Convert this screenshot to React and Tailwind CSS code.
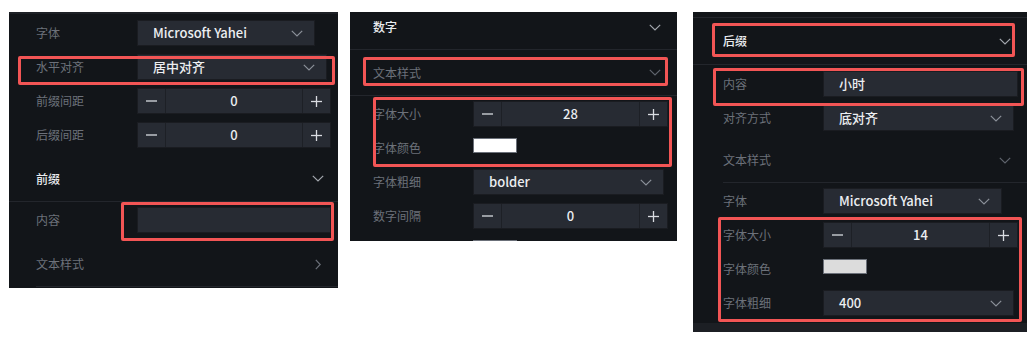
import React from 'react';

const font = { fontFamily: '"Noto Sans CJK SC", "Noto Sans", sans-serif' };

const ChevronDown = ({ className = 'text-[#8b9099]' }) => (
  <svg width="12" height="7" viewBox="0 0 12 7" className={className}>
    <polyline points="0.8,0.8 6,6 11.2,0.8" fill="none" stroke="currentColor" strokeWidth="1.2" />
  </svg>
);

const ChevronRight = () => (
  <svg width="6" height="11" viewBox="0 0 6 11" className="text-[#6a6f78]">
    <polyline points="0.8,0.8 5.2,5.5 0.8,10.2" fill="none" stroke="currentColor" strokeWidth="1.2" />
  </svg>
);

const Minus = () => (
  <svg width="11" height="2" viewBox="0 0 11 2">
    <line x1="0" y1="1" x2="11" y2="1" stroke="#d9dce1" strokeWidth="1.3" />
  </svg>
);

const Plus = () => (
  <svg width="11" height="11" viewBox="0 0 11 11">
    <line x1="0" y1="5.5" x2="11" y2="5.5" stroke="#d9dce1" strokeWidth="1.3" />
    <line x1="5.5" y1="0" x2="5.5" y2="11" stroke="#d9dce1" strokeWidth="1.3" />
  </svg>
);

const Label = ({ children, w = 'w-[100px]' }) => (
  <div className={`${w} shrink-0 text-[12px] text-[#6c717a]`}>{children}</div>
);

const Select = ({ value, w }) => (
  <div className={`flex items-center justify-between h-[26px] bg-[#272b33] border border-[#1a1c21] pl-[15px] pr-[11px] text-[13px] font-medium text-[#eceef1] ${w}`}>
    <span>{value}</span>
    <ChevronDown />
  </div>
);

const Input = ({ value, w }) => (
  <div className={`flex items-center h-[26px] bg-[#272b33] border border-[#1a1c21] pl-[15px] text-[13px] font-medium text-[#eceef1] ${w}`}>
    {value}
  </div>
);

const Stepper = ({ value, w }) => (
  <div className={`flex h-[26px] bg-[#272b33] border border-[#1a1c21] text-[13px] font-medium text-[#eceef1] ${w}`}>
    <div className="w-[28px] flex items-center justify-center border-r border-[#1d2026]">
      <Minus />
    </div>
    <div className="flex-1 flex items-center justify-center">{value}</div>
    <div className="w-[28px] flex items-center justify-center border-l border-[#1d2026]">
      <Plus />
    </div>
  </div>
);

const Swatch = ({ color }) => (
  <div className={`self-start mt-[3px] w-[44px] h-[15px] border border-[#6b7079] ${color}`} />
);

const Row = ({ label, children, pad, lw }) => (
  <div className={`flex items-center h-[26px] ${pad}`}>
    <Label w={lw}>{label}</Label>
    {children}
  </div>
);

const Mark = ({ className }) => (
  <div className={`absolute border-[3px] border-[#f25555] rounded-[2px] pointer-events-none ${className}`} />
);

export default function App() {
  return (
    <div className="relative w-[1034px] h-[344px] bg-white flex items-start pt-[12px]" style={font}>
      {/* panel 1 */}
      <div className="ml-[9px] w-[329px] bg-[#121519]">
        <div className="h-[2px] bg-[#1e2126]" />
        <div className="pt-[6px] flex flex-col gap-[8px]">
          <Row label="字体" pad="pl-[27px]" lw="w-[101px]">
            <Select value="Microsoft Yahei" w="w-[178px]" />
          </Row>
          <Row label="水平对齐" pad="pl-[27px]" lw="w-[101px]">
            <Select value="居中对齐" w="w-[190px]" />
          </Row>
          <Row label="前缀间距" pad="pl-[27px]" lw="w-[101px]">
            <Stepper value="0" w="w-[194px]" />
          </Row>
          <Row label="后缀间距" pad="pl-[27px]" lw="w-[101px]">
            <Stepper value="0" w="w-[194px]" />
          </Row>
        </div>
        <div className="mt-[8px] h-[46px] flex items-center justify-between pl-[27px] pr-[14px] border-b border-[#23262c]">
          <span className="text-[12px] font-medium text-[#e9ebee]">前缀</span>
          <ChevronDown className="text-[#a3a7ae]" />
        </div>
        <div className="mt-[5px]">
          <Row label="内容" pad="pl-[27px]" lw="w-[101px]">
            <Input value="" w="w-[194px]" />
          </Row>
        </div>
        <div className="mt-[9px] ml-[27px] h-[45px] flex items-center justify-between pr-[17px] border-b border-[#23262c]">
          <span className="text-[12px] text-[#6c717a]">文本样式</span>
          <ChevronRight />
        </div>
        <div className="h-[1px]" />
      </div>

      {/* panel 2 */}
      <div className="ml-[12px] w-[327px] h-[229px] overflow-hidden bg-[#121519]">
        <div className="h-[38px] flex items-center justify-between pl-[23px] pr-[16px] pb-[7px] border-b border-[#23262c]">
          <span className="text-[12px] font-medium text-[#e9ebee]">数字</span>
          <ChevronDown className="text-[#a3a7ae]" />
        </div>
        <div className="h-[46px] flex items-center justify-between pl-[23px] pr-[16px] border-b border-[#23262c]">
          <span className="text-[12px] text-[#6c717a]">文本样式</span>
          <ChevronDown className="text-[#5f646d]" />
        </div>
        <div className="pt-[5px] flex flex-col gap-[8px]">
          <Row label="字体大小" pad="pl-[23px]">
            <Stepper value="28" w="w-[195px]" />
          </Row>
          <Row label="字体颜色" pad="pl-[23px]">
            <Swatch color="bg-white" />
          </Row>
          <Row label="字体粗细" pad="pl-[23px]">
            <Select value="bolder" w="w-[191px]" />
          </Row>
          <Row label="数字间隔" pad="pl-[23px]">
            <Stepper value="0" w="w-[195px]" />
          </Row>
          <Row label="" pad="pl-[23px]">
            <Swatch color="bg-white" />
          </Row>
        </div>
      </div>

      {/* panel 3 */}
      <div className="ml-[16px] w-[334px] bg-[#121519]">
        <div className="h-[6px] border-b border-[#23262c]" />
        <div className="h-[47px] flex items-center justify-between pl-[30px] pr-[16px] border-b border-[#23262c]">
          <span className="text-[12px] font-medium text-[#e9ebee]">后缀</span>
          <ChevronDown className="text-[#a3a7ae]" />
        </div>
        <div className="mt-[6px] flex flex-col gap-[8px]">
          <Row label="内容" pad="pl-[30px]">
            <Input value="小时" w="w-[195px]" />
          </Row>
          <Row label="对齐方式" pad="pl-[30px]">
            <Select value="底对齐" w="w-[191px]" />
          </Row>
        </div>
        <div className="mt-[7px] ml-[30px] h-[45px] flex items-center justify-between pr-[16px] border-b border-[#23262c]">
          <span className="text-[12px] text-[#6c717a]">文本样式</span>
          <ChevronDown className="text-[#5f646d]" />
        </div>
        <div className="mt-[5px] flex flex-col gap-[8px]">
          <Row label="字体" pad="pl-[30px]">
            <Select value="Microsoft Yahei" w="w-[179px]" />
          </Row>
          <Row label="字体大小" pad="pl-[30px]">
            <Stepper value="14" w="w-[195px]" />
          </Row>
          <Row label="字体颜色" pad="pl-[30px]">
            <Swatch color="bg-[#dcdcdc]" />
          </Row>
          <Row label="字体粗细" pad="pl-[30px]">
            <Select value="400" w="w-[191px]" />
          </Row>
        </div>
        <div className="h-[7px]" />
        <div className="h-[9px] bg-[#1c1f24]" />
      </div>

      {/* annotation marks */}
      <Mark className="left-[18px] top-[56px] w-[317px] h-[29px]" />
      <Mark className="left-[121px] top-[202px] w-[213px] h-[39px]" />
      <Mark className="left-[363px] top-[57px] w-[305px] h-[29px]" />
      <Mark className="left-[373px] top-[97px] w-[299px] h-[70px]" />
      <Mark className="left-[712px] top-[23px] w-[303px] h-[34px]" />
      <Mark className="left-[713px] top-[68px] w-[311px] h-[38px]" />
      <Mark className="left-[718px] top-[217px] w-[304px] h-[105px]" />
    </div>
  );
}
